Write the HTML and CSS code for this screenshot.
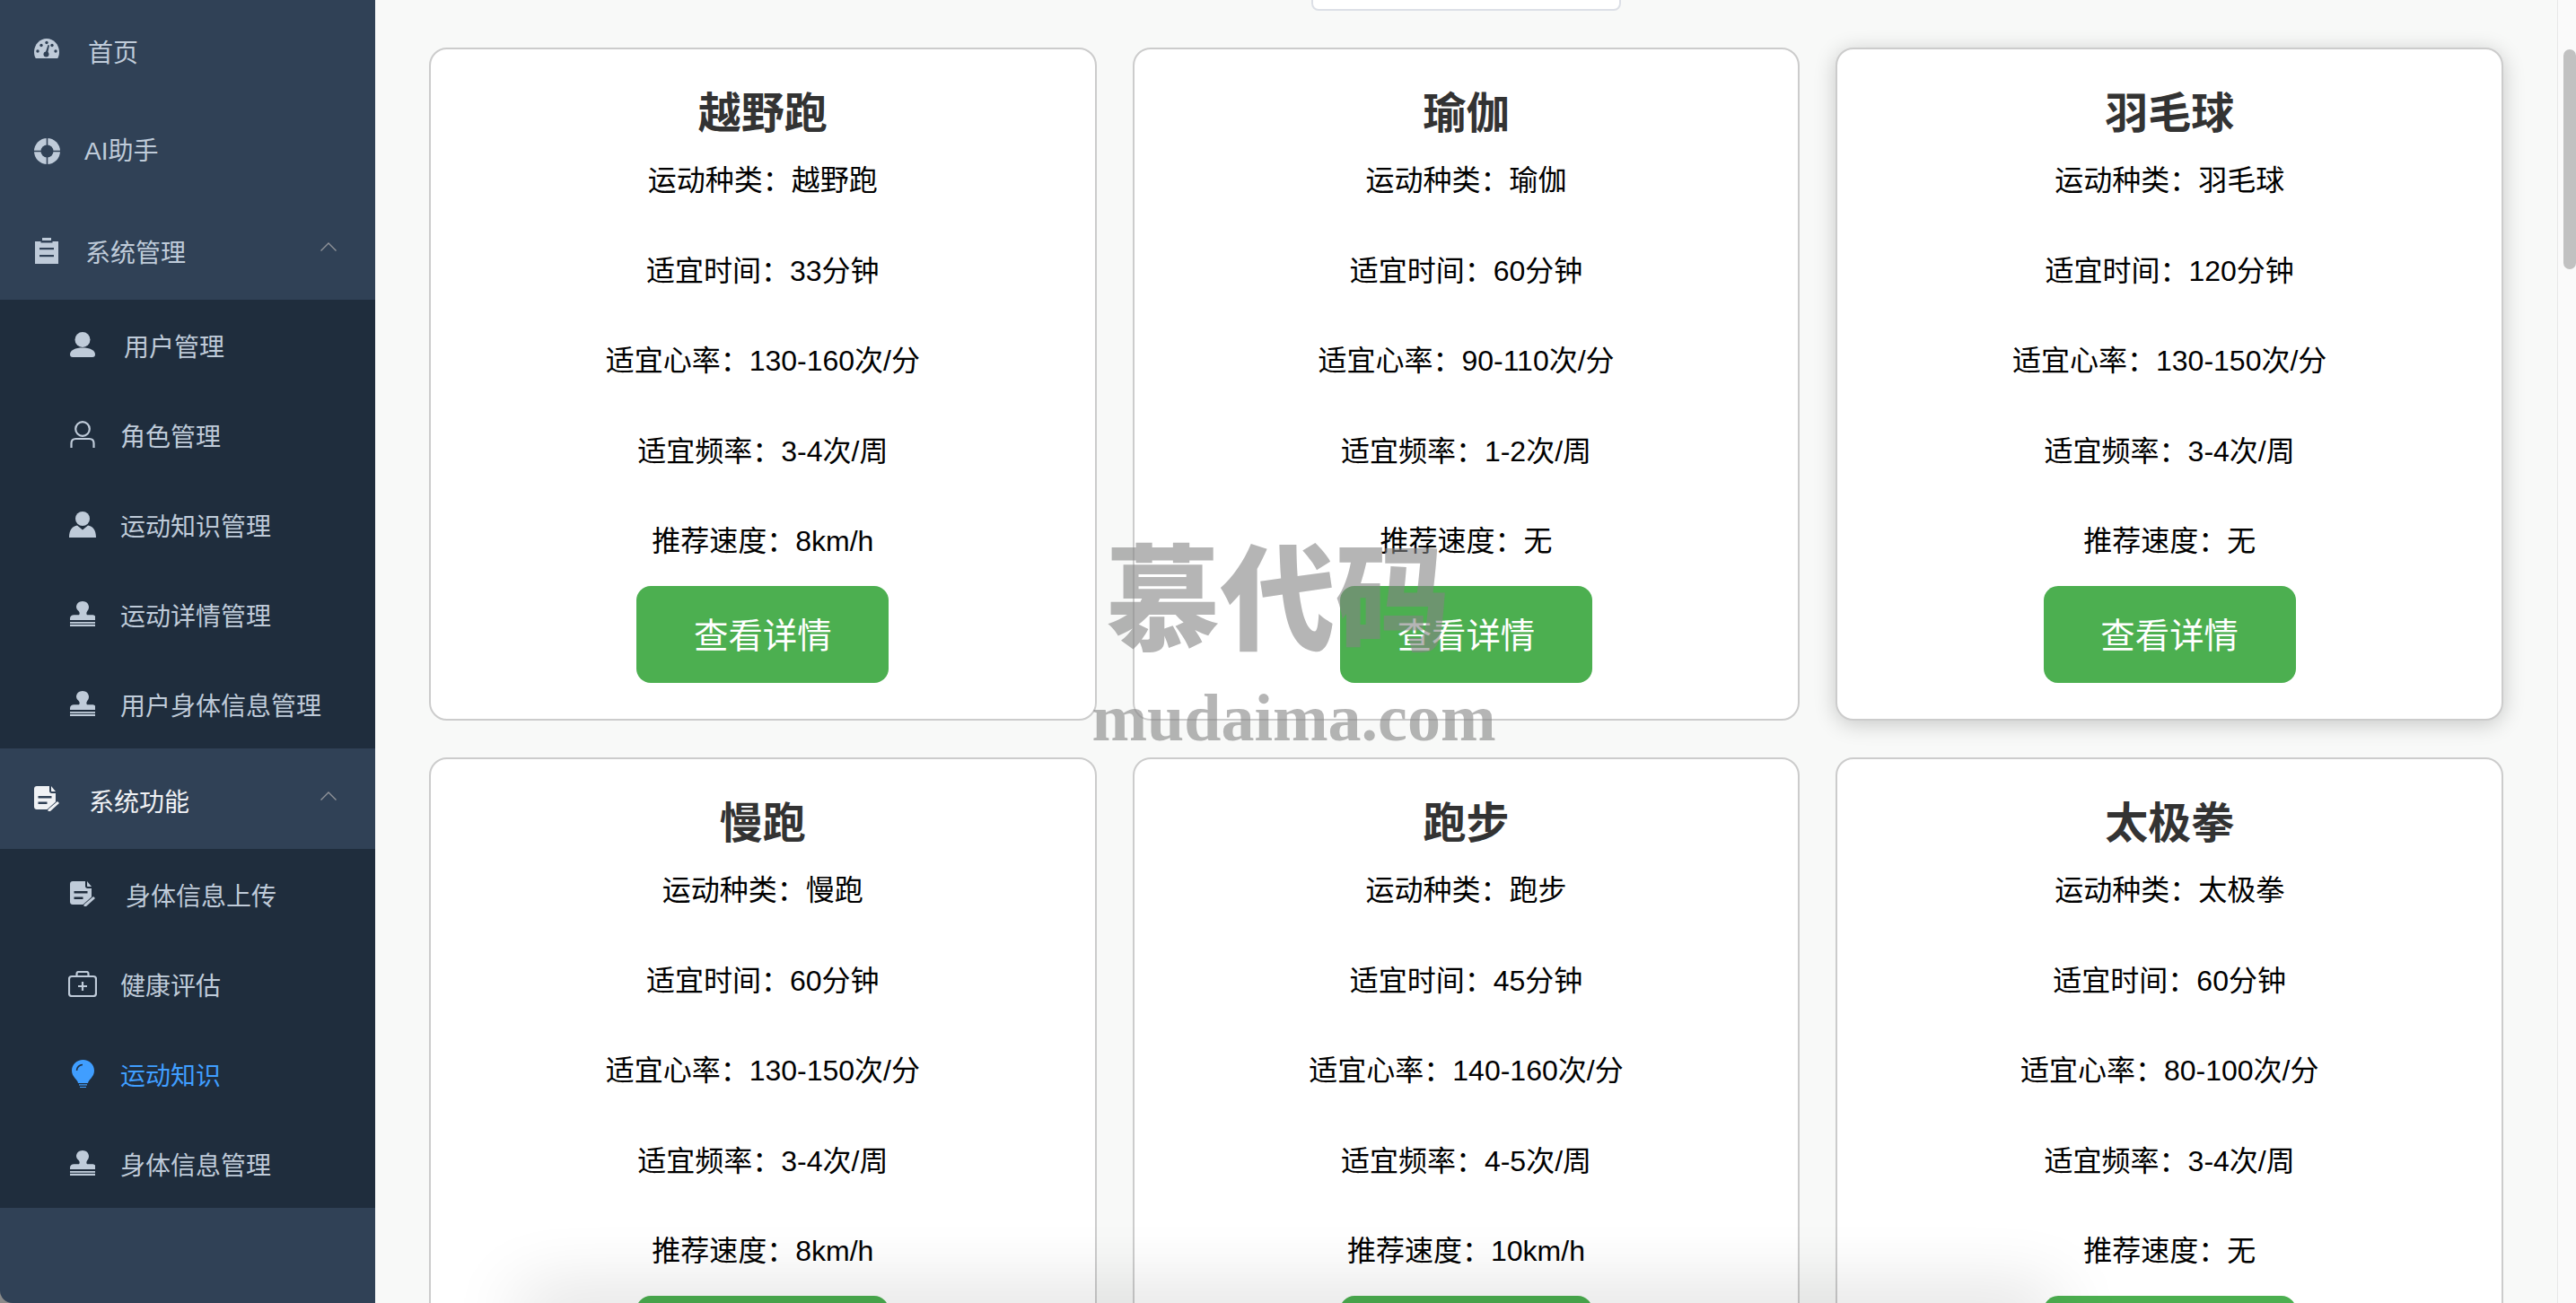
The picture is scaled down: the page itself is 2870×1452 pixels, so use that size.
FILE: index.html
```html
<!DOCTYPE html>
<html lang="zh-CN">
<head>
  <meta charset="UTF-8">
  <meta name="viewport" content="width=device-width, initial-scale=1.0">
  <title>运动知识</title>
  <link rel="stylesheet" href="styles.css">
</head>
<body>
<!-- icon sprite -->
<svg class="sprite" xmlns="http://www.w3.org/2000/svg">
  <symbol id="i-stamp" viewBox="0 0 28 28">
    <path d="M14 0c4 0 7 2.800 7 6.500 0 2.600-1.500 4-2.300 5.500-.5 1-.5 2.200.3 3.200h5.500c2.500 0 4.500 1.600 4.500 3.800v2H0v-2c0-2.200 2-3.800 4.500-3.800H10c.8-1 .8-2.200.3-3.200C9.500 10.500 7 9.100 7 6.500 7 2.800 10 0 14 0z"/>
    <rect y="23" width="28" height="1.800"/>
    <rect y="25.800" width="28" height="2.200"/>
  </symbol>
  <symbol id="i-doc" viewBox="0 0 28 28">
    <path fill-rule="evenodd" d="M3 0h14v5.500c0 1.400 1.100 2.500 2.500 2.500H24v9.500L14.500 26H3c-1.700 0-3-1.300-3-3V3c0-1.700 1.300-3 3-3zm1.500 11v2.500h15V11zm0 6.500V20h10v-2.500z"/>
    <path d="M19 0l5 6h-4c-.6 0-1-.4-1-1z"/>
    <path d="M26 17l2 2-10 9h-2.500v-2z"/>
  </symbol>
</svg>

<div class="layout">
  <aside class="sidebar">
    <a class="menu-row">
      <span class="menu-icon icon-up"><svg class="icon-dash" width="28" height="22" viewBox="0 0 28 22"><path d="M1.800 22C.600 20 0 17.500 0 15 0 6.700 6.300 0 14 0s14 6.700 14 15c0 2.500-.6 5-1.800 7z"/><g class="hole"><circle cx="4" cy="14" r="1.700"/><circle cx="8" cy="7.500" r="1.700"/><circle cx="14" cy="4.500" r="1.700"/><circle cx="24" cy="14" r="1.700"/><circle cx="20" cy="7.500" r="1.700"/><circle cx="13.500" cy="17.500" r="3"/><path d="M12.500 16l3-9 1.500.4-2 9.600z"/></g></svg></span>
      <span class="menu-label gap-30">首页</span>
    </a>
    <a class="menu-row">
      <span class="menu-icon"><svg width="29" height="29" viewBox="0 0 29 29"><circle cx="14.500" cy="14.500" r="14.500"/><g class="hole"><circle cx="14.500" cy="14.500" r="7"/><path d="M13.700 0h1.600v8h-1.600zM13.700 21h1.600v8h-1.600zM0 13.700h8v1.600H0zM21 13.700h8v1.600h-8z"/></g><path d="M14.500 9.500l1 4 4 1-4 1-1 4-1-4-4-1 4-1z" class="hole"/></svg></span>
      <span class="menu-label menu-label--mixed">AI助手</span>
    </a>

    <a class="menu-row menu-title menu-title--short">
      <span class="menu-icon"><svg width="26" height="29" viewBox="0 0 26 29"><path d="M8 0h10v3H8z"/><path d="M0 4h6.500v1.500h13V4H26v25H0z"/><g class="hole"><rect x="5" y="11" width="16" height="2.200"/><rect x="5" y="19" width="16" height="2.200"/></g></svg></span>
      <span class="menu-label gap-27">系统管理</span>
      <svg class="chevron" width="18" height="10" viewBox="0 0 18 10"><path d="M.5 9.500L9 1l8.500 8.500"/></svg>
    </a>
    <div class="submenu">
      <a class="sub-row">
        <span class="menu-icon"><svg width="28" height="28" viewBox="0 0 28 28"><ellipse cx="14" cy="8.500" rx="8.500" ry="8.500"/><path d="M0 25c0-5 6-7.500 14-7.500S28 20 28 25c0 2-1 3-3 3H3c-2 0-3-1-3-3z"/></svg></span>
        <span class="menu-label gap-30">用户管理</span>
      </a>
      <a class="sub-row">
        <span class="menu-icon"><svg class="icon-line" width="28" height="30" viewBox="0 0 28 30"><circle cx="14" cy="9" r="7.800"/><path d="M1.500 30v-5c0-3 2-5 5-5h15c3 0 5 2 5 5v5"/></svg></span>
        <span class="menu-label">角色管理</span>
      </a>
      <a class="sub-row">
        <span class="menu-icon"><svg width="30" height="29" viewBox="0 0 30 29"><circle cx="15" cy="8" r="8"/><path d="M9 15.500l6 5 6-5c5 1 9 4.500 9 13.500H0c0-9 4-12.500 9-13.500z"/></svg></span>
        <span class="menu-label">运动知识管理</span>
      </a>
      <a class="sub-row">
        <span class="menu-icon"><svg width="28" height="28"><use href="#i-stamp"/></svg></span>
        <span class="menu-label">运动详情管理</span>
      </a>
      <a class="sub-row">
        <span class="menu-icon"><svg width="28" height="28"><use href="#i-stamp"/></svg></span>
        <span class="menu-label">用户身体信息管理</span>
      </a>
    </div>

    <a class="menu-row menu-title menu-title--open">
      <span class="menu-icon"><svg width="28" height="28"><use href="#i-doc"/></svg></span>
      <span class="menu-label gap-31">系统功能</span>
      <svg class="chevron chevron--low" width="18" height="10" viewBox="0 0 18 10"><path d="M.5 9.500L9 1l8.500 8.500"/></svg>
    </a>
    <div class="submenu">
      <a class="sub-row">
        <span class="menu-icon"><svg width="28" height="28"><use href="#i-doc"/></svg></span>
        <span class="menu-label gap-32">身体信息上传</span>
      </a>
      <a class="sub-row">
        <span class="menu-icon"><svg class="icon-line" width="32" height="29" viewBox="0 0 32 29"><rect x="1" y="6" width="30" height="22" rx="3"/><path d="M9.500 6V3c0-1.200.8-2 2-2h9c1.200 0 2 .8 2 2v3M16 12v10M11 17h10"/></svg></span>
        <span class="menu-label">健康评估</span>
      </a>
      <a class="sub-row sub-row--active">
        <span class="menu-icon"><svg class="icon-bulb" width="25" height="31" viewBox="0 0 25 31"><path d="M12.500 0C19.400 0 25 5.300 25 12c0 3.500-1.500 6-3.500 8.500-1.500 1.800-3 3-3.500 5.500H7c-.5-2.500-2-3.700-3.500-5.500C1.500 18 0 15.500 0 12 0 5.300 5.600 0 12.500 0z"/><path d="M8 27.300h9v1.200H8zM9 30h7v1H9z"/><path class="bulb-shine" d="M5.500 12c0-3.500 3-6.500 6.500-6.500"/></svg></span>
        <span class="menu-label">运动知识</span>
      </a>
      <a class="sub-row">
        <span class="menu-icon"><svg width="28" height="28"><use href="#i-stamp"/></svg></span>
        <span class="menu-label">身体信息管理</span>
      </a>
    </div>
  </aside>

  <main class="main">
    <div class="search-box"></div>

    <div class="sport-grid">
      <div class="sport-card">
        <h3>越野跑</h3>
        <p>运动种类：越野跑</p>
        <p>适宜时间：33分钟</p>
        <p>适宜心率：130-160次/分</p>
        <p>适宜频率：3-4次/周</p>
        <p>推荐速度：8km/h</p>
        <button class="detail-btn">查看详情</button>
      </div>
      <div class="sport-card">
        <h3>瑜伽</h3>
        <p>运动种类：瑜伽</p>
        <p>适宜时间：60分钟</p>
        <p>适宜心率：90-110次/分</p>
        <p>适宜频率：1-2次/周</p>
        <p>推荐速度：无</p>
        <button class="detail-btn">查看详情</button>
      </div>
      <div class="sport-card sport-card--hover">
        <h3>羽毛球</h3>
        <p>运动种类：羽毛球</p>
        <p>适宜时间：120分钟</p>
        <p>适宜心率：130-150次/分</p>
        <p>适宜频率：3-4次/周</p>
        <p>推荐速度：无</p>
        <button class="detail-btn">查看详情</button>
      </div>
      <div class="sport-card">
        <h3>慢跑</h3>
        <p>运动种类：慢跑</p>
        <p>适宜时间：60分钟</p>
        <p>适宜心率：130-150次/分</p>
        <p>适宜频率：3-4次/周</p>
        <p>推荐速度：8km/h</p>
        <button class="detail-btn">查看详情</button>
      </div>
      <div class="sport-card">
        <h3>跑步</h3>
        <p>运动种类：跑步</p>
        <p>适宜时间：45分钟</p>
        <p>适宜心率：140-160次/分</p>
        <p>适宜频率：4-5次/周</p>
        <p>推荐速度：10km/h</p>
        <button class="detail-btn">查看详情</button>
      </div>
      <div class="sport-card">
        <h3>太极拳</h3>
        <p>运动种类：太极拳</p>
        <p>适宜时间：60分钟</p>
        <p>适宜心率：80-100次/分</p>
        <p>适宜频率：3-4次/周</p>
        <p>推荐速度：无</p>
        <button class="detail-btn">查看详情</button>
      </div>
    </div>
  </main>

  <div class="page-scrollbar"><div class="page-scrollbar-thumb"></div></div>
</div>

<!-- overlays -->
<div class="dock-shadow"></div>
<div class="watermark">
  <div class="watermark-cn">慕代码</div>
  <div class="watermark-en">mudaima.com</div>
</div>
</body>
</html>
```

FILE: styles.css
```css
html, body {
  margin: 0;
  height: 100%;
  overflow: hidden;
}
body {
  font-family: "Liberation Sans", "Noto Sans CJK SC", sans-serif;
  background-color: #8a8a8a;
}
.sprite {
  display: none;
}
.layout {
  display: flex;
  height: 100vh;
}

/* sidebar */
.sidebar {
  width: 418px;
  flex-shrink: 0;
  background-color: #304156;
  border-bottom-left-radius: 14px;
  color: #bfcbd9;
  font-size: 28px;
  overflow: hidden;
}
.sidebar svg {
  fill: currentColor;
}
.hole {
  fill: #304156;
}
.menu-row {
  display: flex;
  align-items: center;
  height: 112px;
  padding-left: 36px;
}
.menu-title--short {
  height: 110px;
}
.menu-title--open {
  color: #f0f2f5;
}
.sub-row {
  display: flex;
  align-items: center;
  height: 100px;
  padding-left: 76px;
}
.submenu {
  background-color: #1f2d3d;
}
.sub-row--active {
  color: #409eff;
}
.menu-icon {
  display: flex;
  justify-content: center;
  width: 32px;
  flex-shrink: 0;
}
.icon-up {
  margin-bottom: 5px;
}
.menu-label {
  margin-left: 26px;
  padding-top: 8px;
  line-height: 40px;
}
.menu-label--mixed {
  padding-top: 2px;
}
.gap-27 { margin-left: 27px; }
.gap-30 { margin-left: 30px; }
.gap-31 { margin-left: 31px; padding-top: 9px; }
.gap-32 { margin-left: 32px; }
.chevron {
  margin-left: auto;
  margin-right: 43px;
  margin-bottom: 8px;
}
.chevron--low {
  margin-bottom: 6px;
}
.sidebar .chevron path {
  fill: none;
  stroke: #909399;
  stroke-width: 1.4;
}
.sidebar .icon-line {
  fill: none;
  stroke: currentColor;
  stroke-width: 2.2;
}
.icon-bulb .bulb-shine {
  fill: none;
  stroke: #1f2d3d;
  stroke-width: 1.6;
}

/* main content */
.main {
  flex: 1;
  min-width: 0;
  padding: 0 60px;
  background-color: #f8f9f8;
  overflow: hidden;
}
.search-box {
  box-sizing: border-box;
  width: 345px;
  height: 80px;
  margin: -68px auto 41px;
  background: #fff;
  border: 2px solid #dcdfe6;
  border-radius: 8px;
}
.sport-grid {
  display: grid;
  grid-template-columns: repeat(3, 1fr);
  column-gap: 40px;
  row-gap: 41px;
}
.sport-card {
  padding: 40px;
  background: #fff;
  border: 2px solid #ccc;
  border-radius: 20px;
  text-align: center;
}
.sport-card--hover {
  box-shadow: 0 4px 24px rgba(0, 0, 0, 0.2);
}
.sport-card h3 {
  height: 56px;
  margin: 0;
  font-size: 48px;
  font-weight: 700;
  line-height: 63px;
  color: #333;
}
.sport-card p {
  margin: 0;
  font-size: 32px;
  line-height: 100.6px;
  color: #000;
}
.detail-btn {
  display: block;
  width: 281px;
  height: 108px;
  margin: -1px auto 0;
  padding: 0 0 3px;
  background-color: #4caf50;
  color: #fff;
  border: none;
  border-radius: 16px;
  font-family: inherit;
  font-size: 38.4px;
  cursor: pointer;
}

/* scrollbar */
.page-scrollbar {
  box-sizing: border-box;
  width: 21px;
  flex-shrink: 0;
  padding: 55px 0 0 6px;
  background-color: #fafafa;
  border-left: 1px solid #e8e8e8;
}
.page-scrollbar-thumb {
  height: 245px;
  background-color: #c1c1c1;
  border-radius: 7px;
}

/* overlays */
.dock-shadow {
  position: fixed;
  left: 590px;
  right: 590px;
  bottom: -30px;
  height: 30px;
  box-shadow: 0 0 80px 10px rgba(0, 0, 0, 0.16);
  pointer-events: none;
}
.watermark {
  position: fixed;
  left: 1216px;
  top: 585px;
  width: 451px;
  text-align: center;
  color: rgba(131, 131, 131, 0.6);
  pointer-events: none;
}
.watermark-cn {
  padding-right: 36px;
  font-family: "Noto Sans CJK SC", serif;
  font-size: 128px;
  font-weight: 900;
  line-height: 150px;
}
.watermark-en {
  margin-top: 28px;
  font-family: "Liberation Serif", serif;
  font-size: 74px;
  font-weight: 700;
  line-height: 74px;
}
```
